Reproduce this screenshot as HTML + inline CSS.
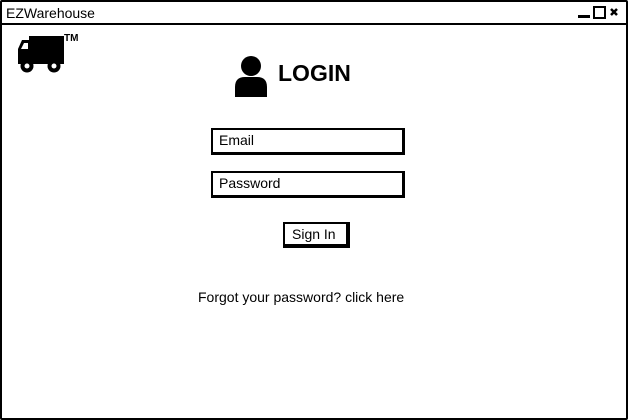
<!DOCTYPE html>
<html><head><style>
body{margin:0;width:628px;height:420px;background:#fff;font-family:"Liberation Sans",sans-serif;position:relative;overflow:hidden}
.a{position:absolute}
</style></head><body>
<div class="a" style="left:0;top:0;width:624px;height:416px;border:2px solid #000;border-radius:2px"></div>
<div class="a" style="left:0;top:23px;width:628px;height:2px;background:#000"></div>
<div class="a" style="left:6px;top:5px;font-size:14px">EZWarehouse</div>
<div class="a" style="left:578px;top:15px;width:12px;height:3px;background:#000"></div>
<div class="a" style="left:593px;top:6px;width:9px;height:9px;border:2px solid #000"></div>
<svg class="a" style="left:609px;top:7px" width="10" height="10" viewBox="0 0 10 10"><path d="M2 2 L8 8 M8 2 L2 8" stroke="#000" stroke-width="2.5"/></svg>
<svg class="a" style="left:17px;top:35px" width="48" height="40" viewBox="0 0 48 40">
<rect x="12" y="1" width="35" height="25" fill="#000"/>
<path d="M1 14 L5 5 H13 V26 H1 Z" fill="#000"/>
<path d="M4 14 L7 8 H11 V14 Z" fill="#fff"/>
<rect x="1" y="24" width="46" height="5" fill="#000"/>
<circle cx="10" cy="31" r="6.5" fill="#000"/><circle cx="10" cy="31" r="2.5" fill="#fff"/>
<circle cx="37" cy="31" r="6.5" fill="#000"/><circle cx="37" cy="31" r="2.5" fill="#fff"/>
</svg>
<div class="a" style="left:64px;top:33px;font-size:10px;font-weight:bold">TM</div>
<svg class="a" style="left:233px;top:55px" width="36" height="43" viewBox="0 0 36 43">
<circle cx="18" cy="11" r="10" fill="#000"/>
<path d="M2 42 V32 Q2 22 12 22 H24 Q34 22 34 32 V42 Z" fill="#000"/>
</svg>
<div class="a" style="left:278px;top:60px;font-size:23px;font-weight:bold">LOGIN</div>
<div class="a" style="left:211px;top:128px;width:189px;height:22px;border:2px solid #000;border-bottom-width:3px;border-right-width:3px"></div>
<div class="a" style="left:219px;top:132px;font-size:14px">Email</div>
<div class="a" style="left:211px;top:171px;width:189px;height:22px;border:2px solid #000;border-bottom-width:3px;border-right-width:3px"></div>
<div class="a" style="left:219px;top:175px;font-size:14px">Password</div>
<div class="a" style="left:283px;top:222px;width:61px;height:20px;border:2px solid #000;border-bottom-width:4px;border-right-width:4px"></div>
<div class="a" style="left:292px;top:226px;font-size:14px">Sign In</div>
<div class="a" style="left:198px;top:289px;font-size:14px">Forgot your password? click here</div>
</body></html>
